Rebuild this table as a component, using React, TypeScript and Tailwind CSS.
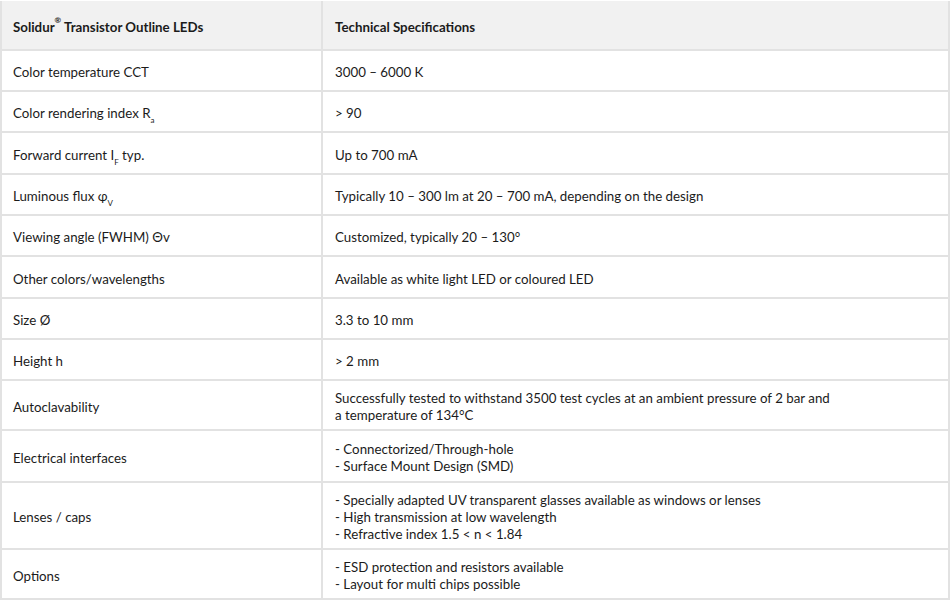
import React from 'react';

type Row = {
  label: React.ReactNode;
  value: React.ReactNode;
  h: string;
};

const Sub = ({ children }: { children: React.ReactNode }) => (
  <sub className="text-[8px] align-[-3px] leading-none">{children}</sub>
);

const rows: Row[] = [
  { label: 'Color temperature CCT', value: '3000 – 6000 K', h: 'h-[41px]' },
  { label: <>Color rendering index R<Sub>a</Sub></>, value: '> 90', h: 'h-[41px]' },
  { label: <>Forward current I<Sub>F</Sub> typ.</>, value: 'Up to 700 mA', h: 'h-[42px]' },
  {
    label: <>Luminous flux φ<Sub>V</Sub></>,
    value: 'Typically 10 – 300 lm at 20 – 700 mA, depending on the design',
    h: 'h-[41px]'
  },
  { label: 'Viewing angle (FWHM) Θv', value: 'Customized, typically 20 – 130°', h: 'h-[41px]' },
  { label: 'Other colors/wavelengths', value: 'Available as white light LED or coloured LED', h: 'h-[42px]' },
  { label: 'Size Ø', value: '3.3 to 10 mm', h: 'h-[41px]' },
  { label: 'Height h', value: '> 2 mm', h: 'h-[41px]' },
  {
    label: 'Autoclavability',
    value: (
      <>
        Successfully tested to withstand 3500 test cycles at an ambient pressure of 2 bar and
        <br />a temperature of 134°C
      </>
    ),
    h: 'h-[50px]'
  },
  {
    label: 'Electrical interfaces',
    value: (
      <>
        - Connectorized/Through-hole
        <br />- Surface Mount Design (SMD)
      </>
    ),
    h: 'h-[52px]'
  },
  {
    label: 'Lenses / caps',
    value: (
      <>
        - Specially adapted UV transparent glasses available as windows or lenses
        <br />- High transmission at low wavelength
        <br />- Refractive index 1.5 &lt; n &lt; 1.84
      </>
    ),
    h: 'h-[67px]'
  },
  {
    label: 'Options',
    value: (
      <>
        - ESD protection and resistors available
        <br />- Layout for multi chips possible
      </>
    ),
    h: 'h-[50px]'
  }
];

export default function App() {
  return (
    <div className="w-[950px] h-[603px] bg-white pt-px font-['Lato',sans-serif] text-[13.3px] leading-[17px] text-[#1b1b1b]">
      <div className="border-x-2 border-[#e2e2e2]">
        <div className="flex h-[50px] bg-[#f1f1f1] border-b-2 border-[#e2e2e2] font-bold">
          <div className="w-[321px] shrink-0 border-r-2 border-[#e2e2e2] pl-[11px] pt-[4px] flex items-center">
            <span>
              Solidur<sup className="text-[8px] align-[5px] leading-none">®</sup> Transistor Outline LEDs
            </span>
          </div>
          <div className="flex-1 pl-[12px] pt-[4px] flex items-center">Technical Specifications</div>
        </div>
        {rows.map((row, i) => (
          <div key={i} className={`flex ${row.h} border-b-2 border-[#e2e2e2]`}>
            <div className="w-[321px] shrink-0 border-r-2 border-[#e2e2e2] pl-[11px] pt-[4px] flex items-center">
              <span>{row.label}</span>
            </div>
            <div className="flex-1 pl-[12px] pt-[4px] flex items-center">
              <span>{row.value}</span>
            </div>
          </div>
        ))}
      </div>
    </div>
  );
}
